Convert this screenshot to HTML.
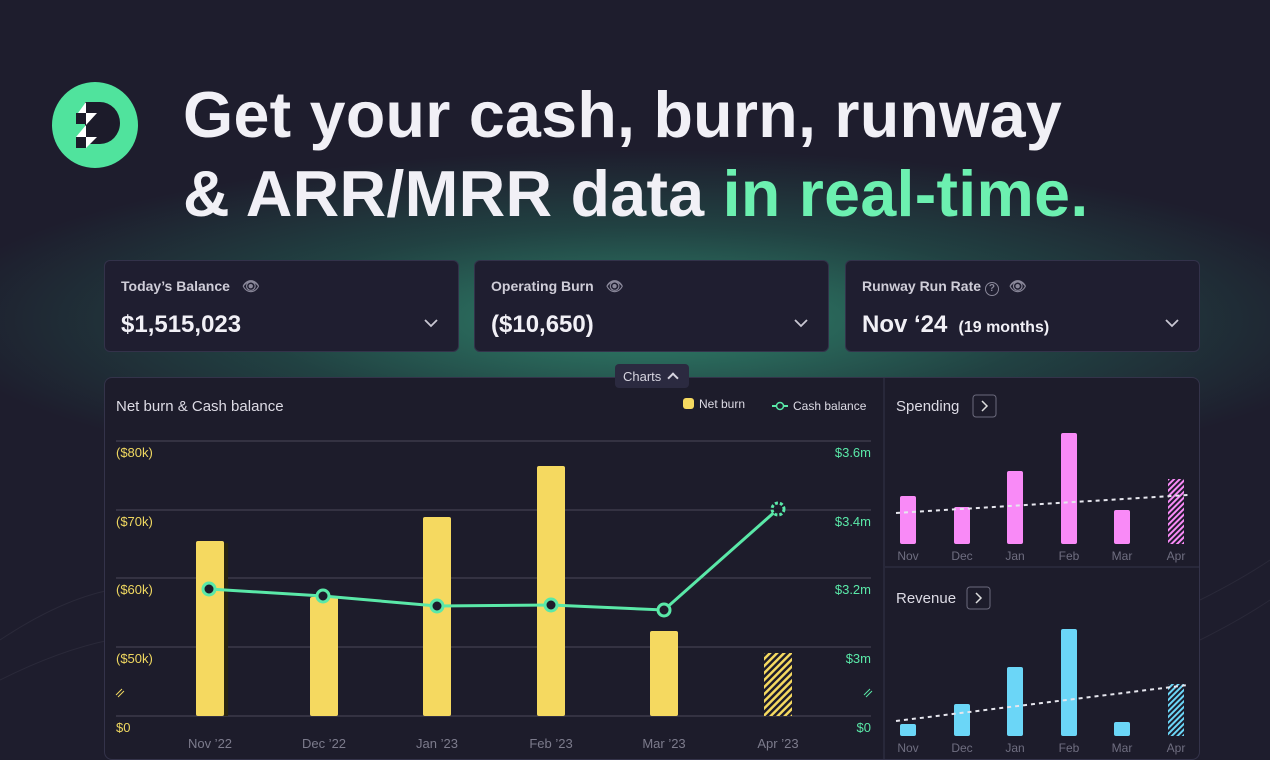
<!DOCTYPE html>
<html><head><meta charset="utf-8"><style>
*{margin:0;padding:0;box-sizing:border-box}
body{width:1270px;height:760px;overflow:hidden;background:#1e1d2d;font-family:"Liberation Sans",sans-serif;position:relative;color:#e9e8f0}
.glow{position:absolute;left:0;top:0;width:1270px;height:760px;background:radial-gradient(ellipse 720px 170px at 650px 320px,rgba(60,200,150,.6),rgba(40,150,115,.3) 55%,rgba(30,29,45,0) 100%)}
h1{position:absolute;left:183px;top:76px;font-size:64.5px;font-weight:bold;line-height:79px;color:#f1f0f6;letter-spacing:0.3px}
h1 span{color:#6cf0b0}
.card{position:absolute;top:260px;height:92px;background:#1f1e30;border:1px solid #33324a;border-radius:6px}
.card .l{position:absolute;left:16px;top:17px;font-size:14px;font-weight:bold;color:#cfcdd8}
.card .v{position:absolute;left:16px;top:50px;font-size:24px;font-weight:bold;color:#f1f0f6}
.card .v small{font-size:16px}
.main{position:absolute;left:104px;top:377px;width:1096px;height:383px;background:#1d1c2b;border:1px solid #34334a;border-radius:8px}
.t{position:absolute;font-size:14px;color:#dddbe5}
.pill{position:absolute;left:615px;top:364px;width:74px;height:24px;background:#2b2a40;border-radius:4px;font-size:13px;color:#d6d4df;padding:5px 0 0 8px}
</style></head><body>
<div class="glow"></div>
<svg style="position:absolute;left:0;top:0" width="1270" height="760">
<g stroke="#2a2939" stroke-width="1" fill="none">
<path d="M0 640 Q60 600 110 590"/><path d="M0 680 Q60 650 110 640"/><path d="M1200 600 Q1240 580 1270 560"/><path d="M1200 640 Q1240 620 1270 600"/>
</g>
<circle cx="95" cy="125" r="43" fill="#50e39d"/>
<path d="M85 102 H100 A20 21 0 0 1 100 144 H85 Z" fill="#1c1b2a"/>
<rect x="76" y="113" width="10" height="11" fill="#1c1b2a"/>
<rect x="76" y="137" width="10" height="11" fill="#1c1b2a"/>
<path d="M86 102 L86 113 L78 113 Z" fill="#fff"/>
<path d="M86 113 L97 113 L86 125 Z" fill="#fff"/>
<path d="M86 125 L86 137 L76 137 Z" fill="#fff"/>
<path d="M86 137 L97 137 L86 148 Z" fill="#fff"/>
</svg>
<h1>Get your cash, burn, runway<br>&amp; ARR/MRR data <span>in real-time.</span></h1>

<div class="card" style="left:104px;width:355px"><div class="l">Today’s Balance <span style="color:#8a889a;margin-left:8px">👁</span></div><div class="v">$1,515,023</div></div>
<div class="card" style="left:474px;width:355px"><div class="l">Operating Burn <span style="color:#8a889a;margin-left:8px">👁</span></div><div class="v">($10,650)</div></div>
<div class="card" style="left:845px;width:355px"><div class="l">Runway Run Rate <span style="display:inline-block;width:14px;height:14px;border:1px solid #8a889a;border-radius:50%;font-size:10px;text-align:center;line-height:12px;color:#8a889a">?</span> <span style="color:#8a889a;margin-left:6px">👁</span></div><div class="v">Nov ‘24 <small>&nbsp;(19 months)</small></div></div>
<svg style="position:absolute;left:0;top:0" width="1270" height="760" fill="none" stroke="#c9c7d3" stroke-width="1.8">
<path d="M425 320 l6 6 l6 -6"/><path d="M795 320 l6 6 l6 -6"/><path d="M1166 320 l6 6 l6 -6"/>
</svg>

<div class="main"></div>
<div class="pill">Charts <span style="display:inline-block;width:8px;height:8px;border-left:2px solid #d6d4df;border-top:2px solid #d6d4df;transform:rotate(45deg);margin-left:4px;position:relative;top:1px"></span></div>
<div class="t" style="left:116px;top:398px;font-size:15px">Net burn &amp; Cash balance</div>
<div class="t" style="left:683px;top:397px;font-size:12px"><span style="display:inline-block;width:11px;height:11px;background:#f5d960;border-radius:3px;vertical-align:-1px;margin-right:5px"></span>Net burn</div>
<div class="t" style="left:793px;top:399px;font-size:12px">Cash balance</div>
<div class="t" style="left:896px;top:398px;font-size:15px">Spending</div>
<div class="t" style="left:896px;top:590px;font-size:15px">Revenue</div>

<svg style="position:absolute;left:0;top:0" width="1270" height="760">
<defs>
<pattern id="hy" width="5" height="5" patternUnits="userSpaceOnUse" patternTransform="rotate(45)"><rect width="5" height="5" fill="#1d1c2b"/><rect width="2.5" height="5" fill="#f5d960"/></pattern>
<pattern id="hp" width="4" height="4" patternUnits="userSpaceOnUse" patternTransform="rotate(45)"><rect width="4" height="4" fill="#1d1c2b"/><rect width="2" height="4" fill="#f98af7"/></pattern>
<pattern id="hb" width="4" height="4" patternUnits="userSpaceOnUse" patternTransform="rotate(45)"><rect width="4" height="4" fill="#1d1c2b"/><rect width="2" height="4" fill="#6bd6f7"/></pattern>
</defs>
<line x1="772" y1="406" x2="788" y2="406" stroke="#5ae8a8" stroke-width="2"/>
<circle cx="780" cy="406" r="3.5" fill="#1d1c2b" stroke="#5ae8a8" stroke-width="1.5"/>
<line x1="884" y1="378" x2="884" y2="760" stroke="#34334a"/>
<line x1="885" y1="567" x2="1199" y2="567" stroke="#34334a"/>
<rect x="973" y="395" width="23" height="22" rx="3" fill="none" stroke="#6b6a7c"/>
<path d="M982 401 l5 5 l-5 5" stroke="#ddd" fill="none" stroke-width="1.5"/>
<rect x="967" y="587" width="23" height="22" rx="3" fill="none" stroke="#6b6a7c"/>
<path d="M976 593 l5 5 l-5 5" stroke="#ddd" fill="none" stroke-width="1.5"/>
<g stroke="#4a495a" stroke-width="1">
<line x1="116" y1="441" x2="871" y2="441"/><line x1="116" y1="510" x2="871" y2="510"/><line x1="116" y1="578" x2="871" y2="578"/><line x1="116" y1="647" x2="871" y2="647"/><line x1="116" y1="716" x2="871" y2="716"/>
</g>
<g font-size="13" fill="#f0d860" font-family="Liberation Sans">
<text x="116" y="457">($80k)</text><text x="116" y="526">($70k)</text><text x="116" y="594">($60k)</text><text x="116" y="663">($50k)</text><text x="116" y="732">$0</text>
</g>
<path d="M116 695 l6 -6 M118 697 l6 -6" stroke="#f0d860"/>
<path d="M864 695 l6 -6 M866 697 l6 -6" stroke="#5ae8a8"/>
<g font-size="13" fill="#5ae8a8" font-family="Liberation Sans" text-anchor="end">
<text x="871" y="457">$3.6m</text><text x="871" y="526">$3.4m</text><text x="871" y="594">$3.2m</text><text x="871" y="663">$3m</text><text x="871" y="732">$0</text>
</g>
<g fill="#f5d960">
<rect x="224" y="543" width="4" height="173" fill="#2a2510"/>
<rect x="196" y="541" width="28" height="175" rx="2"/>
<rect x="310" y="597" width="28" height="119" rx="2"/>
<rect x="423" y="517" width="28" height="199" rx="2"/>
<rect x="537" y="466" width="28" height="250" rx="2"/>
<rect x="650" y="631" width="28" height="85" rx="2"/>
<rect x="764" y="653" width="28" height="63" fill="url(#hy)"/>
</g>
<g font-size="13" fill="#7c7b8c" font-family="Liberation Sans" text-anchor="middle">
<text x="210" y="748">Nov ’22</text><text x="324" y="748">Dec ’22</text><text x="437" y="748">Jan ’23</text><text x="551" y="748">Feb ’23</text><text x="664" y="748">Mar ’23</text><text x="778" y="748">Apr ’23</text>
</g>
<polyline points="209,589 323,596 437,606 551,605 664,610 778,509" fill="none" stroke="#5ae8a8" stroke-width="3"/>
<g fill="#1d1c2b" stroke="#5ae8a8" stroke-width="3">
<circle cx="209" cy="589" r="6"/><circle cx="323" cy="596" r="6"/><circle cx="437" cy="606" r="6"/><circle cx="551" cy="605" r="6"/><circle cx="664" cy="610" r="6"/>
<circle cx="778" cy="509" r="6" stroke-dasharray="3 2"/>
</g>
<g fill="#f98af7">
<rect x="900" y="496" width="16" height="48" rx="2"/><rect x="954" y="507" width="16" height="37" rx="2"/><rect x="1007" y="471" width="16" height="73" rx="2"/><rect x="1061" y="433" width="16" height="111" rx="2"/><rect x="1114" y="510" width="16" height="34" rx="2"/><rect x="1168" y="479" width="16" height="65" fill="url(#hp)"/>
</g>
<line x1="896" y1="513" x2="1188" y2="495" stroke="#e6e6ee" stroke-width="2" stroke-dasharray="4 4"/>
<g fill="#6bd6f7">
<rect x="900" y="724" width="16" height="12" rx="2"/><rect x="954" y="704" width="16" height="32" rx="2"/><rect x="1007" y="667" width="16" height="69" rx="2"/><rect x="1061" y="629" width="16" height="107" rx="2"/><rect x="1114" y="722" width="16" height="14" rx="2"/><rect x="1168" y="684" width="16" height="52" fill="url(#hb)"/>
</g>
<line x1="896" y1="721" x2="1188" y2="685" stroke="#e6e6ee" stroke-width="2" stroke-dasharray="4 4"/>
<g font-size="12" fill="#6f6e80" font-family="Liberation Sans" text-anchor="middle">
<text x="908" y="560">Nov</text><text x="962" y="560">Dec</text><text x="1015" y="560">Jan</text><text x="1069" y="560">Feb</text><text x="1122" y="560">Mar</text><text x="1176" y="560">Apr</text>
<text x="908" y="752">Nov</text><text x="962" y="752">Dec</text><text x="1015" y="752">Jan</text><text x="1069" y="752">Feb</text><text x="1122" y="752">Mar</text><text x="1176" y="752">Apr</text>
</g>
</svg>
</body></html>
